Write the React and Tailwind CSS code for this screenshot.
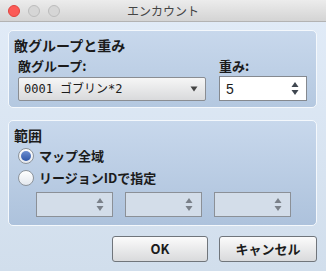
import React, { useState } from 'react';

const font = { fontFamily: '"Noto Sans CJK JP", "Noto Sans", sans-serif' };

const SpinArrows = ({ color = 'text-[#4a4f57]' }) => (
  <svg width="8" height="15" viewBox="0 0 8 15" className={color}>
    <path d="M4 1L7.5 6H0.5Z" fill="currentColor" />
    <path d="M4 14L7.5 9H0.5Z" fill="currentColor" />
  </svg>
);

const Radio = ({ checked }) => (
  <span className="w-[16px] h-[16px] rounded-full border border-[#8d949c] bg-gradient-to-b from-white to-[#e4e8ee] flex items-center justify-center shrink-0">
    {checked && (
      <span className="w-[10px] h-[10px] rounded-full bg-gradient-to-b from-[#6e8fd0] to-[#2f56a8]" />
    )}
  </span>
);

const SpinBox = () => (
  <div className="w-[77px] h-[25px] border border-[#8b9097] bg-[#d3dde9] flex items-center justify-end pr-[8px]">
    <SpinArrows color="text-[#7a8089]" />
  </div>
);

export default function App() {
  const [mode, setMode] = useState('all');

  return (
    <div
      className="w-[326px] h-[271px] flex flex-col bg-gradient-to-b from-[#e2ecf8] to-[#d1deec] text-[#1b1b1b] overflow-hidden"
      style={font}
    >
      {/* title bar */}
      <div className="h-[22px] shrink-0 relative flex items-center justify-center bg-gradient-to-b from-[#ececec] to-[#d4d4d4] border-b border-[#b3b3b3]">
        <div className="absolute left-[8px] top-[5px] flex gap-[8px]">
          <span className="w-[12px] h-[12px] rounded-full bg-[#fc5b57] border border-[#e0443e]" />
          <span className="w-[12px] h-[12px] rounded-full bg-[#d6d6d6] border border-[#bcbcbc]" />
          <span className="w-[12px] h-[12px] rounded-full bg-[#d6d6d6] border border-[#bcbcbc]" />
        </div>
        <span className="text-[12px] leading-[14px] text-[#444]">エンカウント</span>
      </div>

      <div className="flex flex-col pl-[8px] pr-[9px] pt-[8px]">
        {/* panel 1 */}
        <div className="h-[78px] rounded-[5px] border border-[#f4f8fc] bg-gradient-to-b from-[#c8d8ec] to-[#b4c8e0] pl-[5px] pt-[6px] flex flex-col">
          <div className="text-[14px] leading-[16px] font-bold">敵グループと重み</div>
          <div className="flex mt-[5px]">
            <div className="flex flex-col pl-[4px]">
              <div className="text-[13px] leading-[16px] font-bold">敵グループ:</div>
              <div className="mt-[3px] w-[188px] h-[24px] rounded-[2px] border border-[#8a8d92] bg-gradient-to-b from-[#f6f6f6] to-[#d9dadc] flex items-center pl-[5px] pr-[7px]">
                <span
                  className="text-[12px] leading-[14px] flex-1"
                  style={{ fontFamily: '"DejaVu Sans Mono", "Noto Sans CJK JP", monospace' }}
                >
                  0001 ゴブリン*2
                </span>
                <svg width="8" height="6" viewBox="0 0 8 6" className="text-[#444]">
                  <path d="M0.5 0.5H7.5L4 5.5Z" fill="currentColor" />
                </svg>
              </div>
            </div>
            <div className="flex flex-col ml-[13px]">
              <div className="text-[13px] leading-[16px] font-bold">重み:</div>
              <div className="mt-[2px] w-[88px] h-[25px] border border-[#85898f] bg-white flex items-center pl-[6px] pr-[7px]">
                <span className="flex-1 text-[14px] leading-[14px]" style={{ fontFamily: '"Liberation Sans", sans-serif' }}>5</span>
                <SpinArrows color="text-[#3f4650]" />
              </div>
            </div>
          </div>
        </div>

        {/* panel 2 */}
        <div className="mt-[12px] h-[106px] rounded-[5px] border border-[#f4f8fc] bg-gradient-to-b from-[#c8d8ec] to-[#adc2dc] pl-[5px] pt-[6px] flex flex-col">
          <div className="text-[14px] leading-[16px] font-bold">範囲</div>
          <button
            className="flex items-center gap-[5px] pl-[4px] mt-[4px] h-[18px]"
            onClick={() => setMode('all')}
          >
            <Radio checked={mode === 'all'} />
            <span className="text-[13px] leading-[16px] font-bold">マップ全域</span>
          </button>
          <button
            className="flex items-center gap-[5px] pl-[4px] mt-[4px] h-[18px]"
            onClick={() => setMode('region')}
          >
            <Radio checked={mode === 'region'} />
            <span className="text-[13px] leading-[16px] font-bold">リージョンIDで指定</span>
          </button>
          <div className="flex gap-[12px] pl-[22px] mt-[5px]">
            <SpinBox />
            <SpinBox />
            <SpinBox />
          </div>
        </div>

        {/* buttons */}
        <div className="flex justify-end gap-[11px] mt-[10px]">
          <button className="w-[96px] h-[26px] rounded-[3px] border border-[#70757b] bg-gradient-to-b from-[#fbfbfb] to-[#d9dadc] text-[13px] font-bold">
            OK
          </button>
          <button className="w-[98px] h-[26px] rounded-[3px] border border-[#70757b] bg-gradient-to-b from-[#fbfbfb] to-[#d9dadc] text-[13px] font-bold">
            キャンセル
          </button>
        </div>
      </div>
    </div>
  );
}
